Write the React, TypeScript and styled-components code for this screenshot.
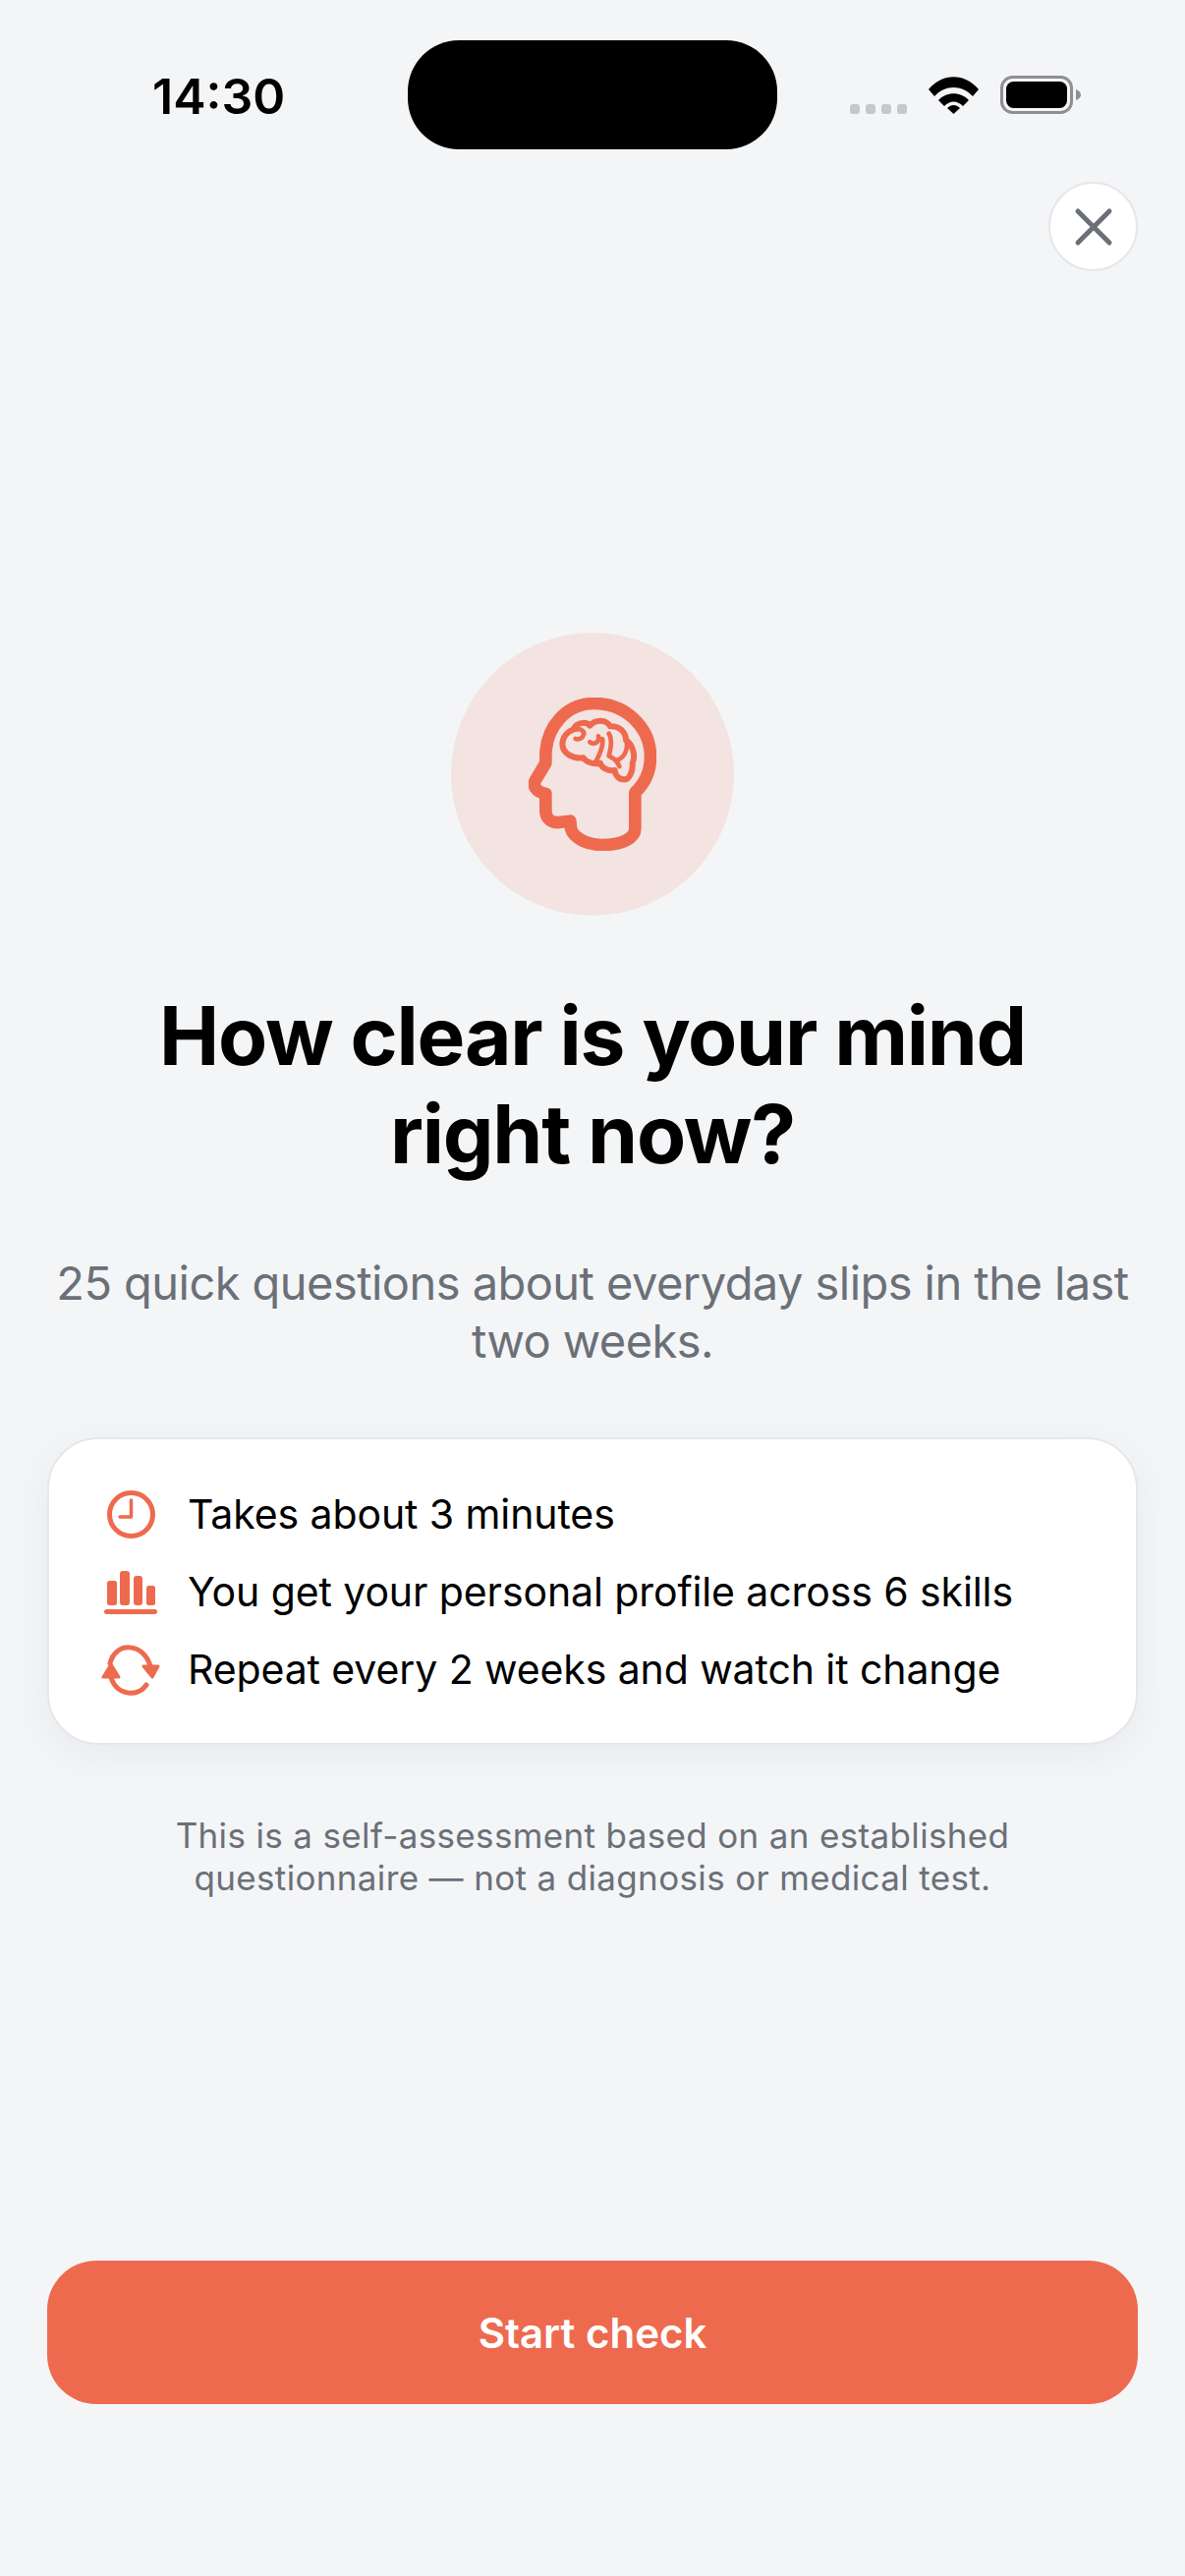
import React from 'react';
import styled, { createGlobalStyle } from 'styled-components';

const CORAL = '#EE6A4F';

const GlobalStyle = createGlobalStyle`
    html, body {
        margin: 0;
        padding: 0;
        background: #F4F5F7;
    }
    * {
        box-sizing: border-box;
    }
`

const Page = styled.div`
    width: 1206px;
    height: 2622px;
    display: flex;
    flex-direction: column;
    overflow: hidden;
    background: #F4F5F7;
    font-family: Inter, "Noto Sans", sans-serif;
    color: #000;
`

const StatusBar = styled.div`
    display: grid;
    grid-template-columns: 415px 376px 1fr;
    align-items: center;
    padding-top: 41px;
`

const Time = styled.div`
    padding-left: 155px;
    font-size: 50px;
    line-height: 60px;
    font-weight: 600;
    margin-top: 2px;
`

const Island = styled.div`
    height: 111px;
    background: #000;
    border-radius: 52px;
`

const StatusIcons = styled.div`
    display: flex;
    align-items: center;
    gap: 22px;
    padding-left: 74px;
`

const SignalDots = styled.div`
    display: flex;
    gap: 6px;
    align-self: flex-end;
`

const SignalDot = styled.span`
    width: 10px;
    height: 10px;
    border-radius: 3px;
    background: #C6C7CA;
`

const CloseRow = styled.div`
    display: flex;
    justify-content: flex-end;
    padding: 33px 48px 0;
`

const CloseButton = styled.button`
    width: 91px;
    height: 91px;
    padding: 0;
    display: flex;
    align-items: center;
    justify-content: center;
    background: #fff;
    border: 2px solid #E5E7EB;
    border-radius: 50%;
    color: #6B7078;
`

const Content = styled.main`
    flex: 1;
    display: flex;
    flex-direction: column;
    align-items: center;
    padding: 0 48px 175px;
`

const Hero = styled.div`
    width: 288px;
    height: 288px;
    margin-top: 368px;
    display: flex;
    align-items: center;
    justify-content: center;
    border-radius: 50%;
    background: #F3E3E1;
`

const Title = styled.h1`
    margin: 73px 0 0;
    font-size: 82px;
    line-height: 100px;
    font-weight: 700;
    letter-spacing: -1.25px;
    text-align: center;
`

const Subtitle = styled.p`
    margin: 71px -10px 0;
    font-size: 47px;
    line-height: 59px;
    font-weight: 400;
    letter-spacing: -0.55px;
    color: #6B7078;
    text-align: center;
    white-space: nowrap;
`

const InfoCard = styled.section`
    width: 100%;
    height: 313px;
    margin-top: 69px;
    padding: 0 53px;
    display: flex;
    flex-direction: column;
    justify-content: center;
    background: #fff;
    border: 2px solid #E5E7EB;
    border-radius: 52px;
    box-shadow: 0 10px 40px rgba(17, 24, 39, 0.05);
`

const InfoRow = styled.div`
    height: 79px;
    display: flex;
    align-items: center;
    gap: 28px;
    font-size: 41px;
    letter-spacing: -0.1px;
`

const InfoIcon = styled.svg`
    flex: 0 0 60px;
    width: 60px;
    height: 60px;
    color: ${CORAL};
`

const Note = styled.p`
    margin: 71px 0 0;
    font-size: 35px;
    line-height: 43px;
    letter-spacing: 0.35px;
    color: #6B7078;
    text-align: center;
`

const StartButton = styled.button`
    width: 100%;
    height: 146px;
    margin-top: auto;
    background: ${CORAL};
    border: 0;
    border-radius: 50px;
    color: #fff;
    font-family: inherit;
    font-size: 42px;
    font-weight: 600;
`

const WifiIcon = () => (
    <svg width="51" height="38" viewBox="0 0 51 38">
        <path d="M0 13 C14 -4 37 -4 51 13 L45 20 C34 8 17 8 6 20 Z" fill="#000" />
        <path d="M10 24 C18 15 33 15 41 24 L35 30 C29 24 22 24 16 30 Z" fill="#000" />
        <path d="M19 32 C23 28 28 28 32 32 L25.5 38 Z" fill="#000" />
    </svg>
);

const BatteryIcon = () => (
    <svg width="82" height="39" viewBox="0 0 82 39">
        <rect x="1.5" y="1.5" width="71" height="36" rx="11" fill="none" stroke="#8E8E93" strokeWidth="3" />
        <rect x="6" y="6" width="62" height="27" rx="7.5" fill="#000" />
        <path d="M77 14 C80 15 82 17 82 19.5 C82 22 80 24 77 25 Z" fill="#8E8E93" />
    </svg>
);

const BrainHeadIcon = () => (
    <svg width="130" height="156" viewBox="295 240 390 468" fill="none" stroke={CORAL} strokeLinejoin="round" strokeLinecap="round">
        <path
            strokeWidth="38"
            d="M620 640 L620 530 C652 500 667 465 667 420 C667 330 590 258 495 258 C410 258 347 330 347 420 L347 440 L316 492 C306 510 318 528 347 534 L347 585 C347 610 365 624 388 621 L422 617 L424 640 C432 672 480 690 520 690 C580 690 620 670 620 640 Z"
        />
        <path
            strokeWidth="18"
            d="M432 338 C438 318 470 310 482 326 C498 306 532 306 544 328 C572 326 592 346 592 370 C614 384 622 420 612 440 C614 466 602 492 586 490 C568 490 558 474 558 462 C536 466 516 452 514 440 C494 446 470 436 462 424 C430 428 398 410 398 382 C398 362 412 344 432 338 Z"
        />
        <path strokeWidth="14" d="M438 338 C456 332 472 346 458 362 C452 368 446 368 438 366" />
        <path strokeWidth="14" d="M482 376 C496 386 512 376 508 358 M520 366 C524 384 512 414 500 436" />
        <path strokeWidth="14" d="M540 350 C552 368 546 396 540 418 C552 424 566 432 572 450 M594 376 C598 396 590 420 568 430" />
    </svg>
);

const ClockIcon = () => (
    <InfoIcon viewBox="0 0 60 60" fill="none" stroke="currentColor" strokeLinecap="round" strokeLinejoin="round">
        <circle cx="30.5" cy="30.5" r="22" strokeWidth="5" />
        <path strokeWidth="3.5" d="M30.5 16 V33 H19" />
    </InfoIcon>
);

const BarsIcon = () => (
    <InfoIcon viewBox="0 0 60 60" fill="currentColor">
        <rect x="6" y="19" width="10" height="25" rx="2.5" />
        <rect x="19" y="9" width="10" height="35" rx="3" />
        <rect x="33" y="14" width="9" height="30" rx="3" />
        <rect x="46" y="24" width="9" height="20" rx="2.5" />
        <rect x="3" y="48" width="54" height="5" rx="2.5" />
    </InfoIcon>
);

const RepeatIcon = () => (
    <InfoIcon viewBox="0 0 60 60">
        <path d="M9 24 C14 2 43 2 50 27" fill="none" stroke="currentColor" strokeWidth="5" strokeLinecap="round" />
        <path d="M10 39 C17 58 38 58 46 46" fill="none" stroke="currentColor" strokeWidth="5" strokeLinecap="round" />
        <path d="M43 27 L58 27 L52 38 Z" fill="currentColor" stroke="currentColor" strokeWidth="3" strokeLinejoin="round" />
        <path d="M2 38 L18 38 L10 25 Z" fill="currentColor" stroke="currentColor" strokeWidth="3" strokeLinejoin="round" />
    </InfoIcon>
);

const App = () => {
    return (
        <Page>
            <GlobalStyle />
            <StatusBar>
                <Time>14:30</Time>
                <Island />
                <StatusIcons>
                    <SignalDots>
                        <SignalDot />
                        <SignalDot />
                        <SignalDot />
                        <SignalDot />
                    </SignalDots>
                    <WifiIcon />
                    <BatteryIcon />
                </StatusIcons>
            </StatusBar>
            <CloseRow>
                <CloseButton aria-label="Close">
                    <svg width="40" height="40" viewBox="0 0 40 40" fill="none" stroke="currentColor" strokeWidth="5" strokeLinecap="round">
                        <path d="M4 4 L36 36 M36 4 L4 36" />
                    </svg>
                </CloseButton>
            </CloseRow>
            <Content>
                <Hero>
                    <BrainHeadIcon />
                </Hero>
                <Title>How clear is your mind<br />right now?</Title>
                <Subtitle>25 quick questions about everyday slips in the last<br />two weeks.</Subtitle>
                <InfoCard>
                    <InfoRow><ClockIcon />Takes about 3 minutes</InfoRow>
                    <InfoRow><BarsIcon />You get your personal profile across 6 skills</InfoRow>
                    <InfoRow><RepeatIcon />Repeat every 2 weeks and watch it change</InfoRow>
                </InfoCard>
                <Note>This is a self-assessment based on an established<br />questionnaire — not a diagnosis or medical test.</Note>
                <StartButton>Start check</StartButton>
            </Content>
        </Page>
    );
}

export default App;
